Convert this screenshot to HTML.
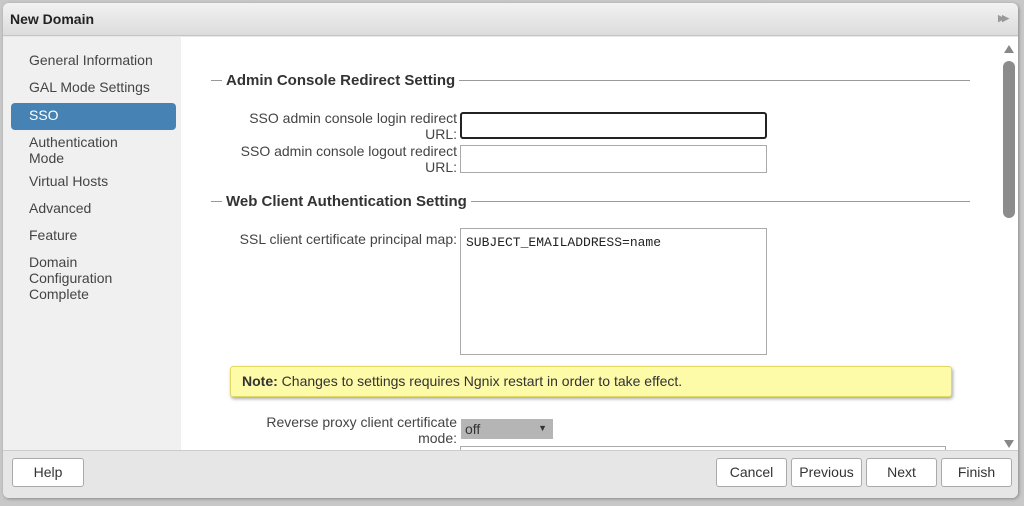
<!DOCTYPE html>
<html><head><style>
*{box-sizing:border-box;margin:0;padding:0}
body{width:1024px;height:506px;background:#c8c8c8;font-family:"Liberation Sans",sans-serif;position:relative;overflow:hidden;color:#333}
.dlg{position:absolute;left:3px;top:3px;width:1015px;height:495px;background:#e8e8e8;border-radius:6px;overflow:hidden;box-shadow:1px 1px 3px #888}
.title{position:absolute;left:0;top:0;width:100%;height:33px;background:linear-gradient(#f2f2f2,#dcdcdc);border-bottom:1px solid #c4c4c4;font-weight:bold;font-size:14px;color:#222;padding:8px 0 0 7px}
.nav{position:absolute;left:0;top:34px;width:178px;height:413px;background:#f0f0f0}
.nav div{position:absolute;left:26px;font-size:14px;color:#444;line-height:16px}
.sel{position:absolute;left:8px;top:67px;width:165px;height:27px;background:#4682b4;border-radius:4px}
.content{position:absolute;left:178px;top:34px;width:837px;height:413px;background:#fff}
.a{position:absolute}
.hd{font-weight:bold;font-size:15px;color:#333;background:#fff;padding:0 4px}
.line{position:absolute;height:1px;background:#999}
.lbl{position:absolute;text-align:right;font-size:14px;color:#444;line-height:16px}
.in{position:absolute;border:1px solid #aaa;background:#fff}
.footer{position:absolute;left:0;top:447px;width:100%;height:48px;background:#e6e6e6;border-top:1px solid #ccc}
.btn{position:absolute;top:7px;height:29px;border:1px solid #aaa;border-radius:3px;background:#fff;font-size:14px;color:#333;text-align:center;line-height:27px}
</style></head><body>
<div class="dlg">
<div class="title">New Domain<span style="position:absolute;right:12px;top:10px;font-size:9px;color:#999;letter-spacing:-3px">▶▶</span></div>
<div class="nav">
<div class="sel" style="left:8px;top:66px"></div>
<div style="top:15px">General Information</div>
<div style="top:42px">GAL Mode Settings</div>
<div style="top:70px;color:#fff">SSO</div>
<div style="top:97px">Authentication<br>Mode</div>
<div style="top:136px">Virtual Hosts</div>
<div style="top:163px">Advanced</div>
<div style="top:190px">Feature</div>
<div style="top:217px">Domain<br>Configuration<br>Complete</div>
</div>
<div class="content">
<div class="line" style="left:30px;top:43px;width:759px"></div>
<div class="a hd" style="left:41px;top:35px">Admin Console Redirect Setting</div>
<div class="lbl" style="left:40px;top:73px;width:236px">SSO admin console login redirect<br>URL:</div>
<div class="in" style="left:279px;top:75px;width:307px;height:27px;border:2px solid #222;border-radius:3px"></div>
<div class="lbl" style="left:40px;top:106px;width:236px">SSO admin console logout redirect<br>URL:</div>
<div class="in" style="left:279px;top:108px;width:307px;height:28px"></div>
<div class="line" style="left:30px;top:164px;width:759px"></div>
<div class="a hd" style="left:41px;top:156px">Web Client Authentication Setting</div>
<div class="lbl" style="left:40px;top:194px;width:236px">SSL client certificate principal map:</div>
<div class="in" style="left:279px;top:191px;width:307px;height:127px;font-family:'Liberation Mono',monospace;font-size:13px;color:#222;padding:6px 0 0 5px">SUBJECT_EMAILADDRESS=name</div>
<div class="a" style="left:49px;top:329px;width:722px;height:31px;background:#fdfaa8;border:1px solid #e0d860;border-radius:3px;box-shadow:1px 2px 3px #aaa;font-size:14px;color:#333;padding:6px 0 0 11px"><b>Note:</b> Changes to settings requires Ngnix restart in order to take effect.</div>
<div class="lbl" style="left:40px;top:377px;width:236px">Reverse proxy client certificate<br>mode:</div>
<div class="a" style="left:280px;top:382px;width:92px;height:20px;background:#b5b5b5;font-size:14px;color:#333;padding:2px 0 0 4px">off<span style="position:absolute;right:6px;top:4px;font-size:9px">▼</span></div>
<div class="in" style="left:279px;top:409px;width:486px;height:20px"></div>
<div class="a" style="left:823px;top:8px;width:0;height:0;border-left:5px solid transparent;border-right:5px solid transparent;border-bottom:8px solid #888"></div>
<div class="a" style="left:822px;top:24px;width:12px;height:157px;background:#8c8c8c;border-radius:6px"></div>
<div class="a" style="left:823px;top:403px;width:0;height:0;border-left:5px solid transparent;border-right:5px solid transparent;border-top:8px solid #888"></div>
</div>
<div class="footer">
<div class="btn" style="left:9px;width:72px">Help</div>
<div class="btn" style="left:713px;width:71px">Cancel</div>
<div class="btn" style="left:788px;width:71px">Previous</div>
<div class="btn" style="left:863px;width:71px">Next</div>
<div class="btn" style="left:938px;width:71px">Finish</div>
</div>
</div>
</body></html>
